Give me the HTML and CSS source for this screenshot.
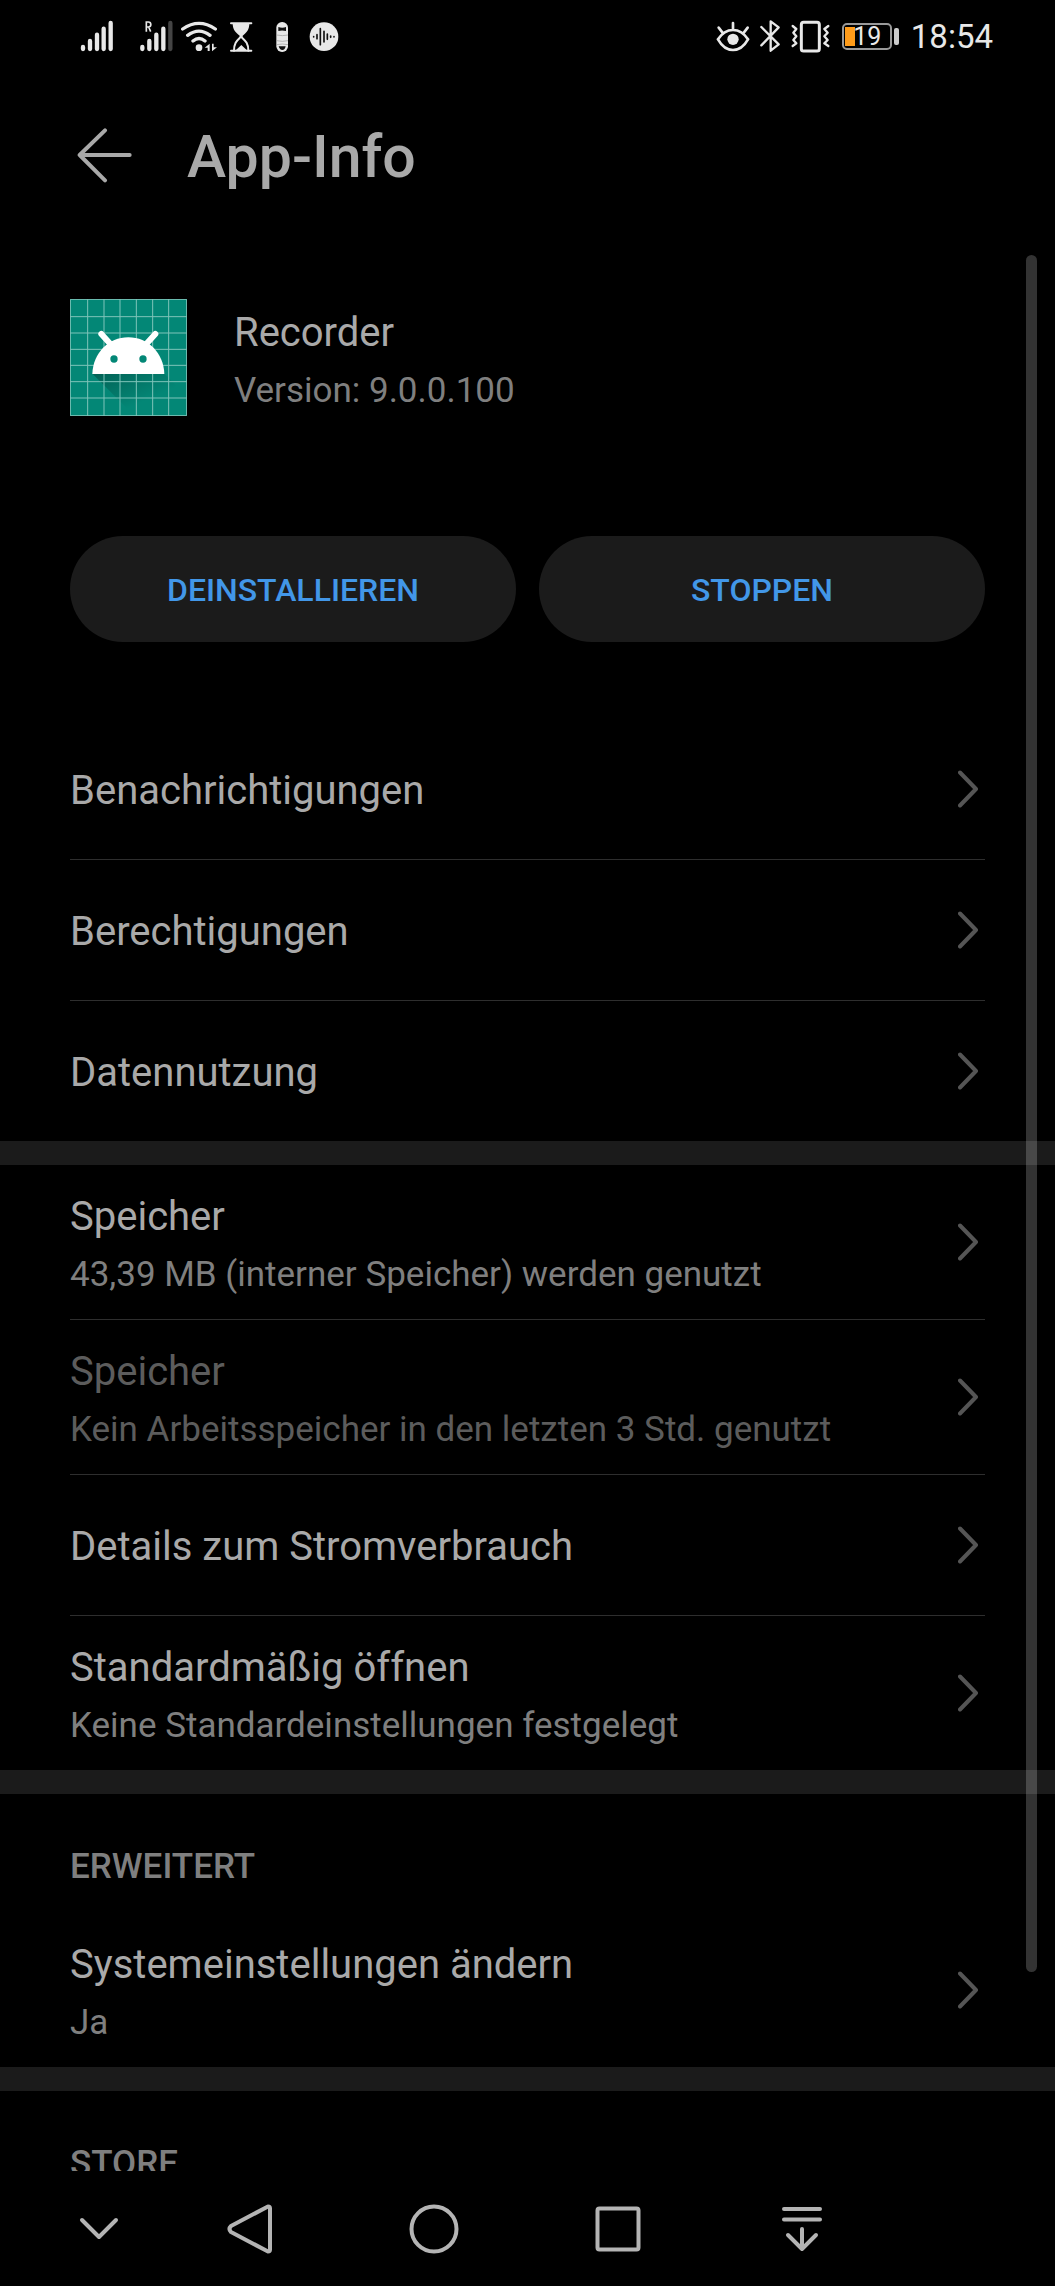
FILE: index.html
```html
<!DOCTYPE html>
<html lang="de">
<head>
<meta charset="utf-8">
<meta name="viewport" content="width=device-width, initial-scale=1">
<title>App-Info</title>
<link rel="stylesheet" href="styles.css">
</head>
<body>
<svg class="defs" aria-hidden="true">
  <symbol id="chevron" viewBox="0 0 20 38"><path d="M2 2.500 18 19 2 35.500" fill="none" stroke="currentColor" stroke-width="4" stroke-linecap="round" stroke-linejoin="round"/></symbol>
</svg>
<div class="screen">
  <div class="status">
    <div class="status-group">
      <svg width="51" height="34" viewBox="60 57 153 102" aria-hidden="true"><g stroke="#e8e8e8" stroke-width="13" stroke-linecap="round"><path d="M69 141v6M90 123v24M111 104v43M131 86v61M152 69v78"/></g></svg>
      <svg width="34" height="34" viewBox="237 57 102 102" aria-hidden="true"><g fill="none" stroke="#e8e8e8" stroke-width="13" stroke-linecap="round"><path d="M247 141v6M268 123v24M289 104v43M310 86v61"/><path d="M331 69v78" stroke="#444"/><path d="M259 95V66h6a7 7 0 0 1 0 15h-6m7 0 6 14" stroke-width="5" stroke-linecap="butt"/></g></svg>
      <svg width="37" height="34" viewBox="363 57 111 102" aria-hidden="true"><g fill="none" stroke="#e8e8e8" stroke-width="10" stroke-linecap="round"><path d="M368 87q49-34 98 0M383 106q34-25 67 0M399 123q18-15 36 0"/></g><circle cx="417" cy="143" r="10" fill="#e8e8e8"/><path d="M434 143 449 131v22h-6v-10zM456 131h5v11h10l-15 12z" fill="#e8e8e8"/></svg>
      <svg width="30" height="34" viewBox="498 57 90 102" aria-hidden="true"><g fill="none" stroke="#e8e8e8" stroke-width="6" stroke-linecap="round"><path d="M513 70h61M513 152h61"/><path d="M522 152c0-25 10-31 21-42 11 11 22 17 22 42"/></g><path d="M518 70h50c0 20-8 28-20 37v7h-9v-7c-12-9-21-17-21-37zM528 150l16-15 16 15z" fill="#e8e8e8"/></svg>
      <svg width="37" height="34" viewBox="612 57 111 102" aria-hidden="true"><rect x="649" y="66" width="35" height="90" rx="17" fill="#e8e8e8"/><path d="M655 81q12 5 23 0v12q-12-3-23 0zM656 139h21q-2 11-10 11t-11-11z" fill="#111"/><path d="M650 105q17 4 34 0M650 122q17 4 34 0M650 134q17-4 34 0" fill="none" stroke="#999" stroke-width="2"/></svg>
      <svg width="30" height="34" viewBox="747 57 90 102" aria-hidden="true"><circle cx="792" cy="110" r="43" fill="#e8e8e8"/><g stroke="#111" stroke-width="5" stroke-linecap="round"><path d="M761 110v1M771 104v12M781 86v48M792 94v32M802 102v16M812 108v4M822 110v1"/></g></svg>
    </div>
    <div class="status-group">
      <svg width="36" height="34" viewBox="45 57 108 102" aria-hidden="true"><g fill="none" stroke="#e8e8e8" stroke-width="8" stroke-linecap="round"><path d="M54 118Q72 90 99 90t45 28q-18 32-45 32T54 118zM99 69v18M56 83l11 14M143 83l-11 14"/></g><circle cx="99" cy="118" r="17" fill="#e8e8e8"/></svg>
      <svg width="22" height="34" viewBox="177 57 66 102" aria-hidden="true"><path d="M184 81 236 133 212 152V64l24 18-52 54" fill="none" stroke="#e8e8e8" stroke-width="7" stroke-linecap="round" stroke-linejoin="round"/></svg>
      <svg width="42" height="34" viewBox="267 57 126 102" aria-hidden="true"><g fill="none" stroke="#e8e8e8" stroke-width="7" stroke-linecap="round" stroke-linejoin="round"><rect x="304" y="67" width="54" height="86" rx="7" stroke-width="9"/><path d="M278 78l11 9-9 11 9 11-9 11 9 10-11 8M385 78l-12 9 10 11-10 11 10 11-10 10 12 8"/></g></svg>
      <div class="battery" aria-label="Akku 19 %"><span class="battery-body"><span class="battery-level"></span><span class="battery-value">19</span></span><span class="battery-tip"></span></div>
      <time class="clock">18:54</time>
    </div>
  </div>

  <header class="header">
    <button class="back" type="button" aria-label="Zurück"><svg width="56" height="60" viewBox="82 81 168 180" aria-hidden="true"><path d="M240 165H90M166 91 90 165l76 76" fill="none" stroke="#a9a9a9" stroke-width="12" stroke-linecap="round" stroke-linejoin="round"/></svg></button>
    <h1 class="title">App-Info</h1>
  </header>

  <main class="content">
    <section class="app">
      <svg class="app-icon" width="117" height="117" viewBox="62 57 351 351" aria-hidden="true">
        <defs><linearGradient id="shade" x1="0" y1="0" x2="1" y2="1"><stop offset="0" stop-opacity=".28"/><stop offset=".6" stop-opacity="0"/></linearGradient></defs>
        <path d="M62 57h351v351H62z" fill="#038776"/>
        <path d="M130 282h216l67 67v59H256z" fill="url(#shade)"/>
        <path d="M115 57v351M164 57v351M212 57v351M261 57v351M310 57v351M358 57v351M62 110h351M62 159h351M62 208h351M62 256h351M62 305h351M62 354h351M63 58h349v349H63z" fill="none" stroke="#7fc4ba" stroke-width="3"/>
        <path d="M129 282c2-62 48-110 108-110s106 48 108 110z" fill="#fff"/>
        <path d="M156 162l32 35M318 162l-32 35" stroke="#fff" stroke-width="18" stroke-linecap="round"/>
        <circle cx="194" cy="237" r="11" fill="#038776"/><circle cx="281" cy="237" r="11" fill="#038776"/>
      </svg>
      <div class="text"><h2 class="label">Recorder</h2><p class="note">Version: 9.0.0.100</p></div>
    </section>

    <div class="actions">
      <button class="action" type="button">DEINSTALLIEREN</button>
      <button class="action" type="button">STOPPEN</button>
    </div>

    <nav class="list">
      <a class="row" href="#notifications"><span class="text"><span class="label">Benachrichtigungen</span></span><svg class="chevron"><use href="#chevron"/></svg></a>
      <a class="row" href="#permissions"><span class="text"><span class="label">Berechtigungen</span></span><svg class="chevron"><use href="#chevron"/></svg></a>
      <a class="row" href="#data"><span class="text"><span class="label">Datennutzung</span></span><svg class="chevron"><use href="#chevron"/></svg></a>
    </nav>

    <nav class="list divided">
      <a class="row" href="#storage"><span class="text"><span class="label">Speicher</span><span class="note">43,39 MB (interner Speicher) werden genutzt</span></span><svg class="chevron"><use href="#chevron"/></svg></a>
      <a class="row disabled" href="#memory" aria-disabled="true"><span class="text"><span class="label">Speicher</span><span class="note">Kein Arbeitsspeicher in den letzten 3 Std. genutzt</span></span><svg class="chevron"><use href="#chevron"/></svg></a>
      <a class="row" href="#power"><span class="text"><span class="label">Details zum Stromverbrauch</span></span><svg class="chevron"><use href="#chevron"/></svg></a>
      <a class="row" href="#defaults"><span class="text"><span class="label">Standardmäßig öffnen</span><span class="note">Keine Standardeinstellungen festgelegt</span></span><svg class="chevron"><use href="#chevron"/></svg></a>
    </nav>

    <section class="list divided">
      <h2 class="heading">ERWEITERT</h2>
      <a class="row" href="#system"><span class="text"><span class="label">Systemeinstellungen ändern</span><span class="note">Ja</span></span><svg class="chevron"><use href="#chevron"/></svg></a>
    </section>

    <section class="list divided">
      <h2 class="heading">STORE</h2>
    </section>
    <div class="scrollbar"></div>
  </main>

  <nav class="navbar">
    <button type="button" aria-label="Leiste ausblenden"><svg width="50" height="50" viewBox="0 0 50 50"><path d="M8 16 25 33 42 16"/></svg></button>
    <button type="button" aria-label="Zurück"><svg width="50" height="50" viewBox="0 0 50 50"><path d="M43 2.500 6 22q-3 3 0 6L43 47.500q2 0 2-2V4.500q0-2-2-2z"/></svg></button>
    <button type="button" aria-label="Startseite"><svg width="50" height="50" viewBox="0 0 50 50"><circle cx="25" cy="25" r="22.500"/></svg></button>
    <button type="button" aria-label="Letzte Apps"><svg width="50" height="50" viewBox="0 0 50 50"><rect x="4.500" y="4.500" width="41" height="41" rx="2"/></svg></button>
    <button type="button" aria-label="Benachrichtigungen öffnen"><svg width="50" height="50" viewBox="0 0 50 50"><path d="M7 5h36M7 15.500h36M25 25v20M11 31l14 14 14-14"/></svg></button>
  </nav>
</div>
</body>
</html>
```

FILE: styles.css
```css
* {
  box-sizing: border-box;
}

body {
  margin: 0;
  background: #000;
  color: #a9a9a9;
  font-family: Roboto, "Noto Sans", sans-serif;
}

h1, h2, p {
  margin: 0;
  font-weight: 400;
}

button {
  border: 0;
  padding: 0;
  background: none;
  color: inherit;
  font: inherit;
  cursor: pointer;
}

svg {
  display: block;
  flex: none;
}

.defs {
  position: absolute;
  width: 0;
  height: 0;
}

.screen {
  display: flex;
  flex-direction: column;
  height: 100vh;
}

/* Status bar */
.status {
  display: flex;
  flex: none;
  justify-content: space-between;
  height: 72px;
  padding: 0 62px 0 80px;
}

.status-group {
  display: flex;
  align-items: center;
  gap: 8px;
}

.battery {
  display: flex;
  align-items: center;
  justify-content: center;
  gap: 2px;
  width: 64px;
}

.battery-body {
  position: relative;
  width: 50px;
  height: 27px;
  border: 2px solid #999;
  border-radius: 5px;
  text-align: center;
}

.battery-level {
  position: absolute;
  top: 2px;
  bottom: 2px;
  left: 1px;
  width: 10px;
  background: #ff9c1a;
}

.battery-value {
  position: relative;
  display: block;
  color: #e8e8e8;
  font-size: 25px;
  line-height: 24px;
}

.battery-tip {
  width: 5px;
  height: 17px;
  border-radius: 2px;
  background: #ccc;
}

.clock {
  color: #e8e8e8;
  font-size: 33px;
  line-height: 40px;
  padding-top: 2px;
}

/* Title bar */
.header {
  display: flex;
  flex: none;
  align-items: center;
  gap: 54px;
  height: 170px;
  padding: 0 70px 0 77px;
}

.title {
  font-size: 59px;
  font-weight: 500;
  line-height: 70px;
}

/* Scrolling content */
.content {
  position: relative;
  flex: 1;
  min-height: 0;
  overflow: hidden;
}

.scrollbar {
  position: absolute;
  top: 13px;
  right: 18px;
  width: 11px;
  height: 89%;
  border-radius: 6px;
  background: rgba(255, 255, 255, 0.2);
}

.app {
  display: flex;
  align-items: center;
  gap: 47px;
  padding: 57px 70px 0;
}

.text {
  display: flex;
  flex: 1;
  flex-direction: column;
  gap: 6px;
  min-width: 0;
  padding-top: 4px;
}

.label {
  font-size: 40px;
  line-height: 56px;
}

.note {
  color: #7f7f7f;
  font-size: 35px;
  line-height: 48px;
}

.actions {
  display: flex;
  gap: 23px;
  padding: 120px 70px 76px;
}

.action {
  flex: 1;
  height: 106px;
  padding-top: 2px;
  border-radius: 53px;
  background: #1b1b1b;
  color: #4297e8;
  font-size: 32px;
  font-weight: 500;
}

.list {
  padding: 0 70px;
}

.divided {
  border-top: 24px solid #1b1b1b;
}

.row {
  display: flex;
  align-items: center;
  min-height: 141px;
  padding: 20px 7px 20px 0;
  color: inherit;
  text-decoration: none;
}

.row + .row {
  border-top: 1px solid #2e2e2e;
}

.chevron {
  width: 20px;
  height: 38px;
  color: #555;
}

.disabled .label,
.disabled .note {
  color: #5c5c5c;
}

.heading {
  padding: 49px 0 22px;
  color: #7f7f7f;
  font-size: 35px;
  font-weight: 500;
  line-height: 48px;
}

/* System navigation */
.navbar {
  display: grid;
  flex: none;
  grid-template-columns: 118fr 184fr 184fr 184fr 184fr 161fr;
  height: 115px;
  padding-left: 40px;
}

.navbar button {
  display: flex;
  align-items: center;
  justify-content: center;
}

.navbar svg {
  fill: none;
  stroke: #b4b4b4;
  stroke-width: 4px;
  stroke-linecap: round;
  stroke-linejoin: round;
}
```
